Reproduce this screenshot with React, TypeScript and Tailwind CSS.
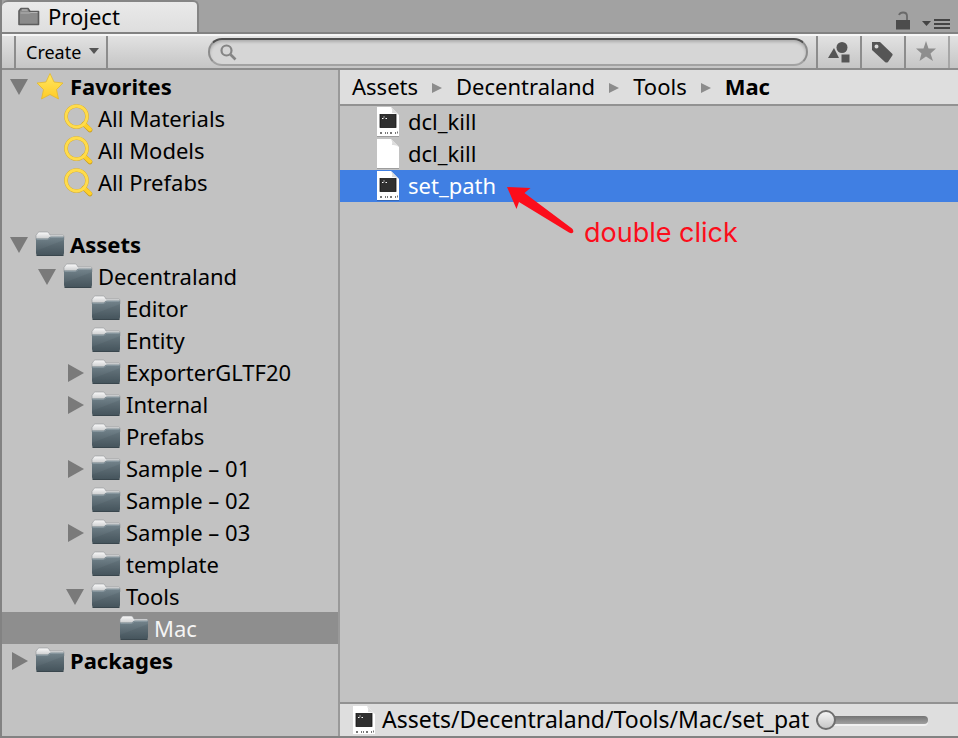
import { useId, useState } from "react";
import type { ReactNode } from "react";

type TreeItem = {
  label: string;
  depth: 0 | 1 | 2 | 3;
  icon: "folder" | "star" | "search";
  state?: "open" | "closed";
  bold?: boolean;
};

const favorites: TreeItem[] = [
  { label: "Favorites", depth: 0, icon: "star", state: "open", bold: true },
  { label: "All Materials", depth: 1, icon: "search" },
  { label: "All Models", depth: 1, icon: "search" },
  { label: "All Prefabs", depth: 1, icon: "search" },
];

const folders: TreeItem[] = [
  { label: "Assets", depth: 0, icon: "folder", state: "open", bold: true },
  { label: "Decentraland", depth: 1, icon: "folder", state: "open" },
  { label: "Editor", depth: 2, icon: "folder" },
  { label: "Entity", depth: 2, icon: "folder" },
  { label: "ExporterGLTF20", depth: 2, icon: "folder", state: "closed" },
  { label: "Internal", depth: 2, icon: "folder", state: "closed" },
  { label: "Prefabs", depth: 2, icon: "folder" },
  { label: "Sample – 01", depth: 2, icon: "folder", state: "closed" },
  { label: "Sample – 02", depth: 2, icon: "folder" },
  { label: "Sample – 03", depth: 2, icon: "folder", state: "closed" },
  { label: "template", depth: 2, icon: "folder" },
  { label: "Tools", depth: 2, icon: "folder", state: "open" },
  { label: "Mac", depth: 3, icon: "folder" },
  { label: "Packages", depth: 0, icon: "folder", state: "closed", bold: true },
];

const indents = ["pl-2", "pl-9", "pl-16", "pl-23"];

function FolderIcon() {
  const id = useId();
  return (
    <svg width="30" height="26" viewBox="0 0 30 26" aria-hidden="true">
      <defs>
        <linearGradient id={`${id}b`} x1="0" y1="0" x2="0" y2="1">
          <stop offset="0" stopColor="#74848c" />
          <stop offset="1" stopColor="#47565e" />
        </linearGradient>
        <linearGradient id={`${id}t`} x1="0" y1="0" x2="0" y2="1">
          <stop offset="0" stopColor="#fafafa" />
          <stop offset="1" stopColor="#c4c6c7" />
        </linearGradient>
      </defs>
      <path d="M1 8V4.500L3 1.500Q3.500 1 4.500 1H12Q13 1 13.500 1.500L15 4H27.500Q29 4 29 5.500V9H1Z" fill={`url(#${id}t)`} stroke="#929698" strokeWidth=".6" />
      <path d="M1 7.500H12Q13 7.500 13.500 7L14.500 6Q15 5.500 16 5.500H29V22Q29 24.500 27 24.500H3Q1 24.500 1 22Z" fill={`url(#${id}b)`} />
      <path d="M1.500 8.500H12.500L15.500 6.500H28.500" fill="none" stroke="#8d9ca3" strokeWidth=".8" />
      <path d="M1 20L29 9V22Q29 24.500 27 24.500H3Q1 24.500 1 22Z" fill="#36454d" opacity=".14" />
      <path d="M1.500 24.500H28.500" stroke="#39464d" strokeWidth="1" />
    </svg>
  );
}

function StarIcon() {
  const id = useId();
  return (
    <svg width="30" height="30" viewBox="0 0 30 30" aria-hidden="true">
      <defs>
        <linearGradient id={id} x1="0" y1="0" x2="0" y2="1">
          <stop offset="0" stopColor="#ffe763" />
          <stop offset="1" stopColor="#ffcb26" />
        </linearGradient>
      </defs>
      <path d="M15 2.500L19 11L28 12L21.500 18.500L23.500 28L15 23.500L6.500 28L8.500 18.500L2 12L11 11Z" fill={`url(#${id})`} stroke="#e5b92d" strokeWidth=".8" strokeLinejoin="round" />
    </svg>
  );
}

function YellowSearchIcon() {
  return (
    <svg width="30" height="30" viewBox="0 0 30 30" fill="none" aria-hidden="true">
      <path d="M21 21L27 27" stroke="#c79b1c" strokeWidth="4.600" strokeLinecap="round" />
      <circle cx="13.500" cy="13.500" r="10.500" stroke="#d3a92c" strokeWidth="3.600" />
      <path d="M21 21L27 26.500" stroke="#ffd02b" strokeWidth="4" strokeLinecap="round" />
      <circle cx="13.500" cy="13.500" r="10.500" stroke="#ffdc4b" strokeWidth="2.800" />
    </svg>
  );
}

function FileIcon({ script = false }: { script?: boolean }) {
  return (
    <svg width="24" height="30" viewBox="0 0 24 30" className="shrink-0" aria-hidden="true">
      <path d="M1 1H15L23 9V30H1Z" fill="#00000030" />
      <path d="M1 0H15L23 8V29H1Z" fill="#fff" />
      <path d="M15 0Q17 3 16 6Q20 5.500 23 8Z" fill="#dcdcdc" />
      {script && (
        <>
          <rect x="4" y="7.500" width="16" height="13" fill="#303030" stroke="#161616" strokeWidth=".8" />
          <path d="M6 11.500H7.500M7.500 10H8.500M9.500 11.500H11" stroke="#fff" strokeWidth="1.100" />
          <path d="M4 26H6M9 26H10M11 26H12M14 26H16M19 26H20M21 25.500H22" stroke="#777" strokeWidth="2" />
        </>
      )}
    </svg>
  );
}

function Disclosure({ state, label }: { state: "open" | "closed"; label: string }) {
  return (
    <button type="button" aria-label={`Toggle ${label}`} className="flex size-[18px] items-center justify-center">
      <svg width="18" height="18" viewBox="0 0 18 18" fill="#7a7a7a" aria-hidden="true">
        {state === "open" ? <path d="M0 1H18L9 17Z" /> : <path d="M2 0L18 9L2 18Z" />}
      </svg>
    </button>
  );
}

function TreeRow({ item, selected, onSelect }: { item: TreeItem; selected: boolean; onSelect: () => void }) {
  return (
    <li className={`flex h-8 items-center ${indents[item.depth]} ${selected ? "bg-[#8e8e8e] text-[#f4f4f4]" : ""}`}>
      <span className="mr-[7px] flex w-[18px] shrink-0 pt-0.5">{item.state && <Disclosure state={item.state} label={item.label} />}</span>
      <button type="button" onClick={onSelect} className={`flex flex-1 items-center gap-[5px] text-left ${item.bold ? "font-bold" : ""}`}>
        <span className="flex w-[30px] shrink-0 justify-center">
          {item.icon === "folder" && <FolderIcon />}
          {item.icon === "star" && <StarIcon />}
          {item.icon === "search" && <YellowSearchIcon />}
        </span>
        <span className="whitespace-nowrap">{item.label}</span>
      </button>
    </li>
  );
}

function ToolButton({ label, children }: { label: string; children: ReactNode }) {
  return (
    <button type="button" aria-label={label} className="flex w-11 shrink-0 items-center justify-center border-l-2 border-[#8c8c8c]">
      {children}
    </button>
  );
}

export default function App() {
  const [folder, setFolder] = useState("Mac");
  const [file, setFile] = useState(2);
  const files = [
    { name: "dcl_kill", script: true },
    { name: "dcl_kill", script: false },
    { name: "set_path", script: true },
  ];

  return (
    <div className="flex h-screen flex-col overflow-hidden border-b-2 border-l-2 border-[#828282] bg-[#c2c2c2] font-['Noto_Sans',sans-serif] text-[22px] leading-7 text-black">
      <header className="flex h-[34px] shrink-0 items-end justify-between border-b-2 border-[#828282] bg-[#a2a2a2]">
        <button type="button" className="flex h-8 w-[197px] items-center gap-2 rounded-t-md border-t-2 border-r-2 border-[#858585] bg-linear-to-b from-[#eaeaea] to-[#dedede] pb-0.5 pl-4">
          <svg width="22" height="19" viewBox="0 0 22 19" aria-hidden="true">
            <path d="M1 17.500V4L3 1.500H10L12 4.500H20.500V17.500Z" fill="#8b8b8b" stroke="#5d5d5d" strokeWidth="1.600" strokeLinejoin="round" />
            <path d="M2.500 6H11L13 5.500H19.500" fill="none" stroke="#b4b4b4" />
            <path d="M4 3H9.500" stroke="#c2c2c2" />
          </svg>
          Project
        </button>
        <div className="flex items-end gap-3 pr-2 pb-0.5">
          <button type="button" aria-label="Lock">
            <svg width="16" height="19" viewBox="0 0 16 19" aria-hidden="true">
              <path d="M2 9H16V18.500H2Z" fill="#4c4c4c" />
              <path d="M5 4Q6 1.500 9 1.500Q13 1.500 13 5V9" fill="none" stroke="#6a6a6a" strokeWidth="1.800" />
            </svg>
          </button>
          <button type="button" aria-label="Panel menu">
            <svg width="28" height="12" viewBox="0 0 28 12" fill="#444" aria-hidden="true">
              <path d="M0 3H9L4.500 8Z" />
              <path d="M12 1H28V3H12ZM12 5H28V7H12ZM12 9H28V11H12Z" />
            </svg>
          </button>
        </div>
      </header>

      <div className="flex h-9 shrink-0 border-t-2 border-b-2 border-t-[#f6f6f6] border-b-[#8c8c8c] bg-linear-to-b from-[#e2e2e2] to-[#c5c5c5]">
        <button type="button" className="ml-3 flex w-[94px] shrink-0 items-center gap-2 border-x-2 border-[#8c8c8c] pl-2.5 text-lg">
          Create
          <svg width="10" height="6" viewBox="0 0 10 6" className="mb-0.5 shrink-0" fill="#555" aria-hidden="true">
            <path d="M0 0H10L5 6Z" />
          </svg>
        </button>
        <label className="mt-0.5 mr-2 mb-0.5 ml-[100px] flex flex-1 items-center self-stretch rounded-full border-2 border-t-[#505050] border-r-[#8c8c8c] border-b-[#a2a2a2] border-l-[#8c8c8c] bg-[#d6d6d6] pl-2.5 shadow-[inset_0_2px_3px_#00000030]">
          <svg width="17" height="17" viewBox="0 0 17 17" fill="none" stroke="#858585" aria-hidden="true">
            <circle cx="6.500" cy="6.500" r="5" strokeWidth="2.200" />
            <path d="M10.500 10.500L15.500 15.500" strokeWidth="2.600" />
          </svg>
          <input type="search" aria-label="Search" className="h-full min-w-0 flex-1 bg-transparent px-2 text-lg outline-none" />
        </label>
        <ToolButton label="Search by type">
          <svg width="22" height="21" viewBox="0 0 22 21" fill="#555" aria-hidden="true">
            <path d="M0 16L6 6L11 16Z" />
            <circle cx="14" cy="5.500" r="5.500" />
            <path d="M13 12H22V21H13Z" stroke="#cfcfcf" strokeWidth="1" />
          </svg>
        </ToolButton>
        <ToolButton label="Search by label">
          <svg width="22" height="22" viewBox="0 0 22 22" fill="#555" aria-hidden="true">
            <path fillRule="evenodd" d="M0 1H8L20.500 13Q21 14 20 15L16 21Q14.500 22 13 21L0 9ZM4.500 3.500A2 2 0 1 0 4.500 7.500A2 2 0 1 0 4.500 3.500Z" />
          </svg>
        </ToolButton>
        <ToolButton label="Save search">
          <svg width="22" height="22" viewBox="0 0 22 22" fill="#8e8e8e" aria-hidden="true">
            <path d="M10 0L12.500 7.500H20L14.500 12.500L17 20L10 15.500L3.500 20L5.500 12.500L0 7.500H7.500Z" />
          </svg>
        </ToolButton>
        <div className="w-2.5 shrink-0 border-l-2 border-[#a6a6a6]" />
      </div>

      <div className="flex min-h-0 flex-1">
        <nav aria-label="Folders" className="flex w-[338px] shrink-0 flex-col gap-[30px] border-r-2 border-[#999]">
          <ul>
            {favorites.map((item) => (
              <TreeRow key={item.label} item={item} selected={folder === item.label} onSelect={() => setFolder(item.label)} />
            ))}
          </ul>
          <ul>
            {folders.map((item) => (
              <TreeRow key={item.label} item={item} selected={folder === item.label} onSelect={() => setFolder(item.label)} />
            ))}
          </ul>
        </nav>

        <main className="flex min-w-0 flex-1 flex-col">
          <nav aria-label="Breadcrumb" className="flex h-9 shrink-0 items-center gap-3.5 border-b-2 border-[#929292] bg-[#dedede] pb-0.5 pl-3">
            {["Assets", "Decentraland", "Tools", "Mac"].map((crumb, i) => (
              <span key={crumb} className="flex items-center gap-3.5">
                {i > 0 && (
                  <svg width="10" height="10" viewBox="0 0 10 10" className="mt-1" fill="#8c8c8c" aria-hidden="true">
                    <path d="M0 0L10 5L0 10Z" />
                  </svg>
                )}
                <button type="button" className={i === 3 ? "font-bold" : ""}>{crumb}</button>
              </span>
            ))}
          </nav>

          <div className="relative flex-1">
            <ul>
              {files.map((entry, i) => (
                <li key={i}>
                  <button
                    type="button"
                    onClick={() => setFile(i)}
                    className={`flex h-8 w-full items-center gap-2 pl-9 ${file === i ? "bg-[#407fe3] text-white" : ""}`}
                  >
                    <FileIcon script={entry.script} />
                    <span className="pb-0.5">{entry.name}</span>
                  </button>
                </li>
              ))}
            </ul>
            <div className="pointer-events-none absolute top-20 left-[166px] flex items-end gap-2.5 text-[#fc0d1b]">
              <svg width="68" height="48" viewBox="0 0 68 48" fill="currentColor" aria-hidden="true">
                <path d="M1 1L24.500 2L18.500 7L66 42.500Q68 44.500 67 46.500Q65.500 48 63 46.500L13 16L10.500 23Z" />
              </svg>
              <span className="-mb-[15px] font-['Inter',sans-serif] text-[27px] leading-8 whitespace-nowrap">double click</span>
            </div>
          </div>

          <footer className="flex h-[34px] shrink-0 items-center border-t-2 border-[#929292] bg-[#dedede] pr-[30px] pl-3">
            <span className="flex h-7 shrink-0 overflow-hidden">
              <FileIcon script />
            </span>
            <span className="ml-1.5 min-w-0 flex-1 pb-0.5 text-[23px] whitespace-nowrap">Assets/Decentraland/Tools/Mac/set_pat</span>
            <input
              type="range"
              aria-label="Icon size"
              defaultValue={0}
              className="h-5 w-28 shrink-0 appearance-none bg-transparent [&::-webkit-slider-runnable-track]:h-2 [&::-webkit-slider-runnable-track]:rounded-full [&::-webkit-slider-runnable-track]:bg-linear-to-b [&::-webkit-slider-runnable-track]:from-[#747474] [&::-webkit-slider-runnable-track]:to-[#a0a0a0] [&::-webkit-slider-runnable-track]:shadow-[0_2px_0_#f0f0f0] [&::-webkit-slider-thumb]:-mt-1.5 [&::-webkit-slider-thumb]:size-5 [&::-webkit-slider-thumb]:appearance-none [&::-webkit-slider-thumb]:rounded-full [&::-webkit-slider-thumb]:border-2 [&::-webkit-slider-thumb]:border-[#6e6e6e] [&::-webkit-slider-thumb]:bg-linear-to-b [&::-webkit-slider-thumb]:from-[#f4f4f4] [&::-webkit-slider-thumb]:to-[#c8c8c8]"
            />
          </footer>
        </main>
      </div>
    </div>
  );
}
